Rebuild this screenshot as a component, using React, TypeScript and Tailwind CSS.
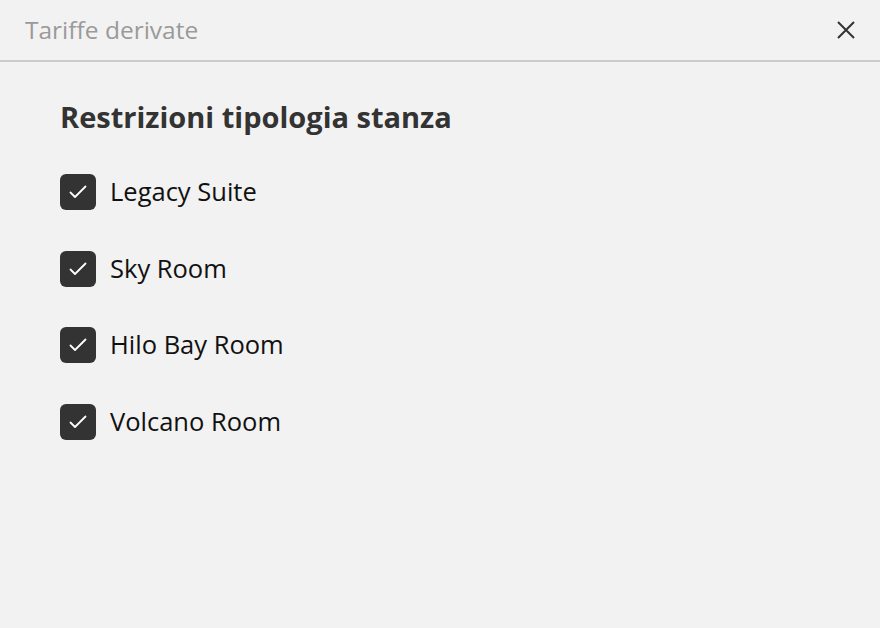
import React from "react";

const rooms = ["Legacy Suite", "Sky Room", "Hilo Bay Room", "Volcano Room"];

export default function App() {
  return (
    <div className="w-[880px] h-[628px] bg-[#f2f2f2] flex flex-col font-['Open_Sans',_'Noto_Sans',_sans-serif]">
      <div className="h-[62px] flex items-center justify-between pl-[25px] pr-[25px] border-b-2 border-[#cbcbcb] shrink-0">
        <span className="text-[24.5px] text-[#9a9a9a] leading-none">Tariffe derivate</span>
        <svg width="18" height="18" viewBox="0 0 18 18" fill="none" stroke="#333333" strokeWidth="2">
          <path d="M1 1L17 17M17 1L1 17" />
        </svg>
      </div>
      <div className="pl-[60px] pt-[37px] flex flex-col">
        <h2 className="text-[29px] font-bold text-[#333333] leading-[36px] whitespace-nowrap">Restrizioni tipologia stanza</h2>
        <div className="flex flex-col gap-[40.5px] mt-[39px]">
          {rooms.map((r) => (
            <div key={r} className="flex items-center gap-[14px] h-[36px]">
              <div className="w-[36px] h-[36px] rounded-[6px] bg-[#333333] flex items-center justify-center shrink-0">
                <svg width="18" height="18" viewBox="0 0 18 18" fill="none" stroke="white" strokeWidth="1.8" strokeLinecap="round" strokeLinejoin="round">
                  <path d="M1.5 9.5L6 14L16.5 3.5" />
                </svg>
              </div>
              <span className="text-[25.5px] text-[#111111] leading-none whitespace-nowrap">{r}</span>
            </div>
          ))}
        </div>
      </div>
    </div>
  );
}
